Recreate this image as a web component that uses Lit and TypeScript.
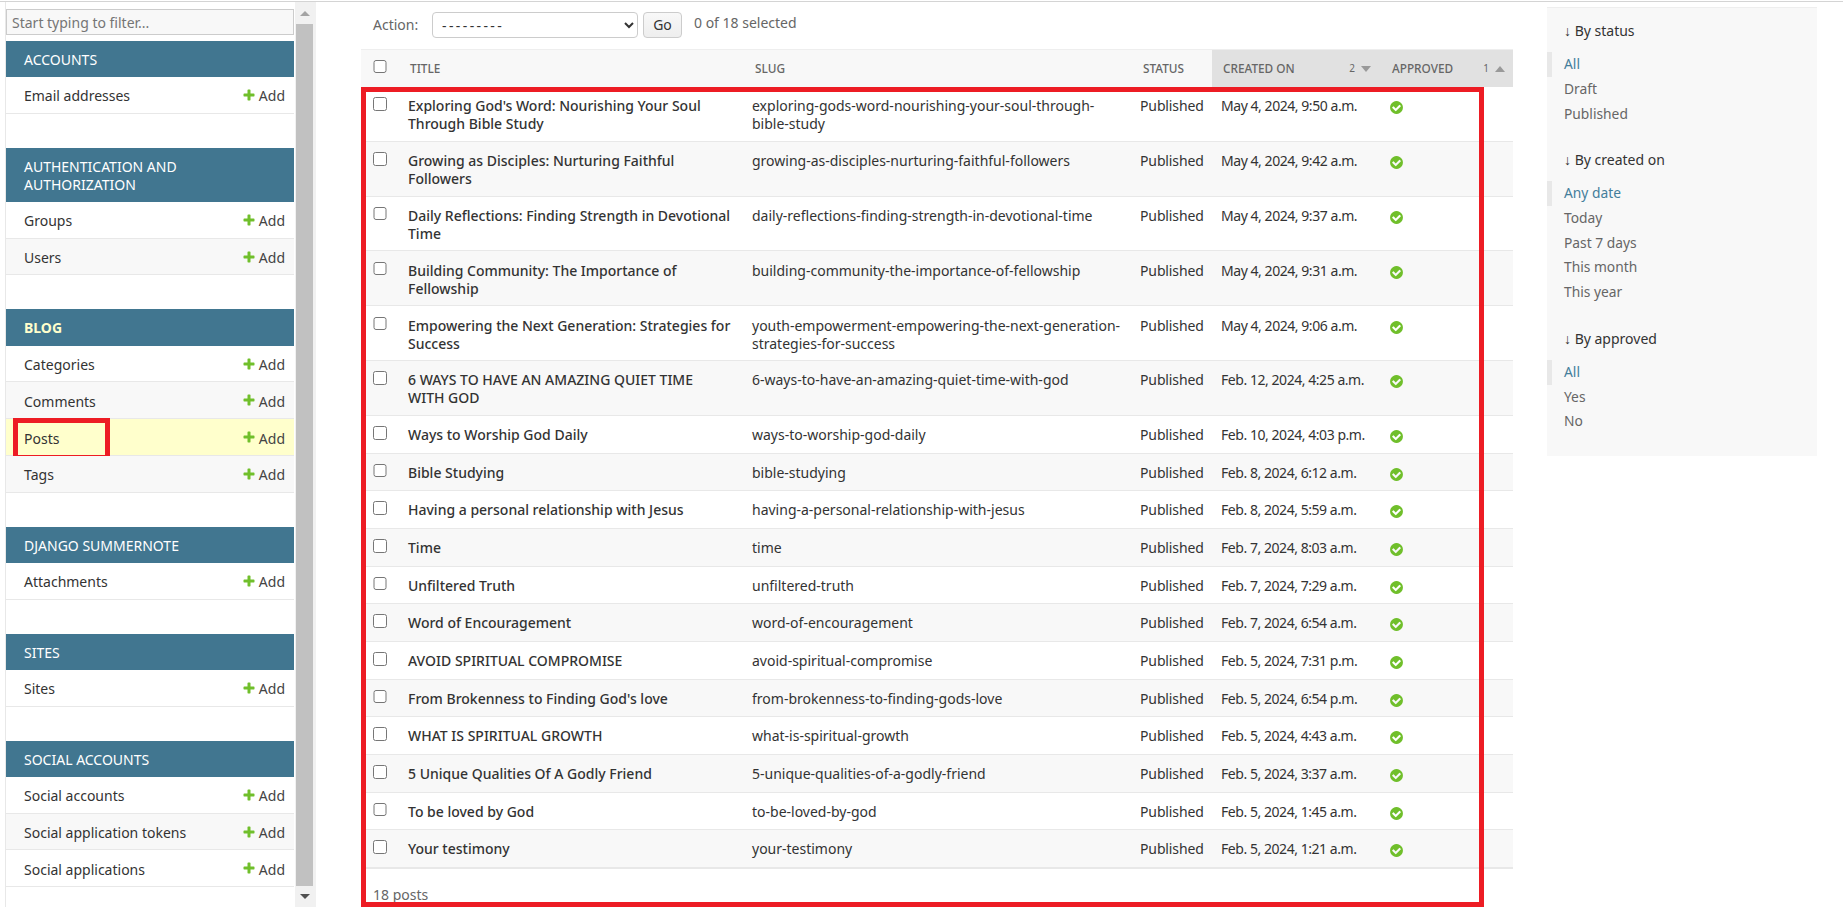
import { LitElement, html, css, svg } from 'lit';
import { customElement } from 'lit/decorators.js';

type NavRow = { name: string; current?: boolean };
type NavModule = { title: string; active?: boolean; rows: NavRow[] };

const NAV: NavModule[] = [
    { title: 'Accounts', rows: [{ name: 'Email addresses' }] },
    { title: 'Authentication and\nAuthorization', rows: [{ name: 'Groups' }, { name: 'Users' }] },
    {
        title: 'Blog',
        active: true,
        rows: [{ name: 'Categories' }, { name: 'Comments' }, { name: 'Posts', current: true }, { name: 'Tags' }],
    },
    { title: 'Django Summernote', rows: [{ name: 'Attachments' }] },
    { title: 'Sites', rows: [{ name: 'Sites' }] },
    {
        title: 'Social Accounts',
        rows: [{ name: 'Social accounts' }, { name: 'Social application tokens' }, { name: 'Social applications' }],
    },
];

// title, slug, date. \n keeps the line breaks of the long rows
const POSTS: [string, string, string][] = [
    ["Exploring God's Word: Nourishing Your Soul\nThrough Bible Study", 'exploring-gods-word-nourishing-your-soul-through-\nbible-study', 'May 4, 2024, 9:50 a.m.'],
    ['Growing as Disciples: Nurturing Faithful\nFollowers', 'growing-as-disciples-nurturing-faithful-followers', 'May 4, 2024, 9:42 a.m.'],
    ['Daily Reflections: Finding Strength in Devotional\nTime', 'daily-reflections-finding-strength-in-devotional-time', 'May 4, 2024, 9:37 a.m.'],
    ['Building Community: The Importance of\nFellowship', 'building-community-the-importance-of-fellowship', 'May 4, 2024, 9:31 a.m.'],
    ['Empowering the Next Generation: Strategies for\nSuccess', 'youth-empowerment-empowering-the-next-generation-\nstrategies-for-success', 'May 4, 2024, 9:06 a.m.'],
    ['6 WAYS TO HAVE AN AMAZING QUIET TIME\nWITH GOD', '6-ways-to-have-an-amazing-quiet-time-with-god', 'Feb. 12, 2024, 4:25 a.m.'],
    ['Ways to Worship God Daily', 'ways-to-worship-god-daily', 'Feb. 10, 2024, 4:03 p.m.'],
    ['Bible Studying', 'bible-studying', 'Feb. 8, 2024, 6:12 a.m.'],
    ['Having a personal relationship with Jesus', 'having-a-personal-relationship-with-jesus', 'Feb. 8, 2024, 5:59 a.m.'],
    ['Time', 'time', 'Feb. 7, 2024, 8:03 a.m.'],
    ['Unfiltered Truth', 'unfiltered-truth', 'Feb. 7, 2024, 7:29 a.m.'],
    ['Word of Encouragement', 'word-of-encouragement', 'Feb. 7, 2024, 6:54 a.m.'],
    ['AVOID SPIRITUAL COMPROMISE', 'avoid-spiritual-compromise', 'Feb. 5, 2024, 7:31 p.m.'],
    ["From Brokenness to Finding God's love", 'from-brokenness-to-finding-gods-love', 'Feb. 5, 2024, 6:54 p.m.'],
    ['WHAT IS SPIRITUAL GROWTH', 'what-is-spiritual-growth', 'Feb. 5, 2024, 4:43 a.m.'],
    ['5 Unique Qualities Of A Godly Friend', '5-unique-qualities-of-a-godly-friend', 'Feb. 5, 2024, 3:37 a.m.'],
    ['To be loved by God', 'to-be-loved-by-god', 'Feb. 5, 2024, 1:45 a.m.'],
    ['Your testimony', 'your-testimony', 'Feb. 5, 2024, 1:21 a.m.'],
];

const FILTERS: { title: string; items: string[] }[] = [
    { title: 'By status', items: ['All', 'Draft', 'Published'] },
    { title: 'By created on', items: ['Any date', 'Today', 'Past 7 days', 'This month', 'This year'] },
    { title: 'By approved', items: ['All', 'Yes', 'No'] },
];

const plusIcon = svg`<svg class="plus" viewBox="0 0 1792 1792"><path fill="#70bf2b" d="M1600 796v192q0 40-28 68t-68 28h-416v416q0 40-28 68t-68 28h-192q-40 0-68-28t-28-68v-416h-416q-40 0-68-28t-28-68v-192q0-40 28-68t68-28h416v-416q0-40 28-68t68-28h192q40 0 68 28t28 68v416h416q40 0 68 28t28 68z"/></svg>`;
const yesIcon = svg`<svg class="yes" viewBox="0 0 1792 1792"><path fill="#70bf2b" d="M1412 734q0-28-18-46l-91-90q-19-19-45-19t-45 19l-408 407-226-226q-19-19-45-19t-45 19l-91 90q-18 18-18 46 0 27 18 45l362 362q19 19 45 19 27 0 46-19l543-543q18-18 18-45zm252 162q0 209-103 385.5t-279.5 279.5-385.5 103-385.5-103-279.5-279.5-103-385.5 103-385.5 279.5-279.5 385.5-103 385.5 103 279.5 279.5 103 385.5z"/></svg>`;

@customElement('app-root')
export class AppRoot extends LitElement {
    static styles = css`
        :host {
            display: block;
            position: relative;
            width: 1843px;
            height: 907px;
            overflow: hidden;
            background: #fff;
            color: #333;
            font-family: 'Noto Sans', 'Open Sans', sans-serif;
            font-size: 14px;
            line-height: 18.15px;
        }
        .page {
            display: flex;
            height: 906px;
            margin-top: 1px;
            border-top: 1px solid #d4d4d4;
            box-sizing: border-box;
        }

        /* left nav */
        .sidebar {
            width: 290px;
            margin-left: 5px;
            border-left: 1px solid #e8e8e8;
            box-sizing: border-box;
            padding-top: 7px;
            flex: none;
        }
        .filter {
            display: block;
            width: 288px;
            height: 26px;
            box-sizing: border-box;
            border: 1px solid #ccc;
            background: #f8f8f8;
            padding: 0 5px;
            font: inherit;
            color: #333;
            outline: none;
        }
        .filter::placeholder {
            color: #757575;
        }
        .modules {
            margin-top: 5.6px;
            width: 288px;
        }
        .module {
            margin-bottom: 34px;
        }
        .caption {
            background: #417690;
            color: #fff;
            padding: 10px 18px 8px;
            white-space: pre;
            text-transform: uppercase;
        }
        .caption.active {
            color: #ffc;
            font-weight: 700;
        }
        .nav-row {
            position: relative;
            display: flex;
            align-items: center;
            justify-content: space-between;
            height: 36.8px;
            box-sizing: border-box;
            padding: 3px 9px 0 18px;
            border-bottom: 1px solid #e8e8e8;
        }
        .nav-row:nth-child(even) {
            background: #f8f8f8;
        }
        .nav-row.current {
            background: #ffc;
        }
        .add {
            display: flex;
            align-items: center;
            gap: 3px;
            color: #444;
        }
        .plus {
            width: 14px;
            height: 14px;
            margin-top: -3px;
        }
        .posts-mark {
            position: absolute;
            left: 7px;
            top: -1px;
            width: 97px;
            height: 42px;
            box-sizing: border-box;
            border: 5px solid #ed1c24;
        }

        /* fake browser scrollbar of the nav */
        .scrollbar {
            flex: none;
            width: 21px;
            display: flex;
            flex-direction: column;
            align-items: center;
            background: #f1f1f1;
            box-sizing: border-box;
            padding: 1px 3px 0 1px;
        }
        .scroll-btn {
            height: 21px;
            flex: none;
            display: flex;
            align-items: center;
            justify-content: center;
        }
        .scroll-btn svg {
            width: 10px;
            height: 5px;
        }
        .thumb {
            flex: 1;
            width: 17px;
            background: #c1c1c1;
        }

        /* results */
        .main {
            position: relative;
            flex: none;
            width: 1152px;
            margin-left: 45px;
            padding-top: 10px;
        }
        .actions {
            display: flex;
            align-items: center;
            height: 26px;
            padding-left: 12px;
            color: #666;
        }
        .actions label {
            width: 59px;
        }
        .actions select {
            width: 206px;
            height: 26px;
            box-sizing: border-box;
            border: 1px solid #ccc;
            border-radius: 4px;
            background-color: #fff;
            padding: 0 5px;
            font: inherit;
            letter-spacing: 2.4px;
            color: #333;
        }
        .go {
            width: 39px;
            height: 26px;
            margin-left: 5px;
            box-sizing: border-box;
            border: 1px solid #ccc;
            border-radius: 4px;
            background: linear-gradient(#f8f8f8, #eee);
            font: inherit;
            color: #333;
            padding: 0;
        }
        .count {
            margin-left: 12px;
            margin-top: -4px;
        }
        .grid {
            display: grid;
            grid-template-columns: 36px 344px 388px 81px 169px 134px;
        }
        .head {
            margin-top: 11px;
            height: 38px;
            box-sizing: border-box;
            border-top: 1px solid #eee;
            background: #f8f8f8;
            color: #666;
            font-size: 11.8px;
            font-weight: 500;
            text-transform: uppercase;
        }
        .th {
            display: flex;
            align-items: center;
            padding-left: 14px;
            white-space: nowrap;
        }
        .th.title {
            padding-left: 13px;
        }
        .th.check {
            padding-left: 12px;
            padding-bottom: 4px;
        }
        .th.sorted {
            background: #e1e1e1;
            justify-content: space-between;
            padding-right: 8px;
            padding-left: 13px;
        }
        .th.first-sorted {
            margin-left: 2px;
            padding-left: 11px;
        }
        .sort {
            display: flex;
            align-items: center;
            gap: 6px;
            font-size: 10px;
            font-weight: 400;
        }
        .sort svg {
            width: 10px;
            height: 6px;
        }
        input[type='checkbox'] {
            width: 13.5px;
            height: 13.5px;
            margin: 0;
            display: block;
        }
        .row {
            box-sizing: border-box;
            min-height: 37.67px;
            padding: 10.2px 0 7.33px;
            border-bottom: 1px solid #e8e8e8;
        }
        .row:nth-child(even) {
            background: #f8f8f8;
        }
        .td {
            padding-left: 11px;
            white-space: pre;
        }
        .td.check {
            padding: 0 0 0 12px;
        }
        .td.title {
            color: #333;
            font-weight: 500;
        }
        .td.status {
            letter-spacing: -0.12px;
        }
        .td.date {
            letter-spacing: -0.45px;
        }
        .yes {
            display: block;
            width: 15px;
            height: 15px;
            margin: 3px 0 0 -1px;
        }
        .rows {
            border-bottom: 1px solid #e8e8e8;
        }
        .footer {
            margin-top: 17.5px;
            padding-left: 12px;
            color: #666;
        }
        .results-mark {
            position: absolute;
            left: 0;
            top: 85px;
            width: 1123px;
            height: 820px;
            box-sizing: border-box;
            border: 5px solid #ed1c24;
            pointer-events: none;
        }

        /* right filter panel */
        .changelist-filter {
            flex: none;
            align-self: flex-start;
            width: 270px;
            margin: 5px 0 0 34px;
            border-top: 1px solid #eee;
            background: #f8f8f8;
            box-sizing: border-box;
            padding: 14px 0 22px;
        }
        .group {
            margin-bottom: 25px;
        }
        .group:last-child {
            margin-bottom: 0;
        }
        .group h3 {
            margin: 0 0 12px;
            padding-left: 17px;
            font: inherit;
            color: #333;
        }
        .group ul {
            list-style: none;
            margin: 0;
            padding: 0;
        }
        .group li {
            height: 24.7px;
            line-height: 24.7px;
            padding-left: 17px;
            color: #666;
            font-size: 13.8px;
        }
        .group li.selected {
            border-left: 5px solid #e8e8e8;
            padding-left: 12px;
            color: #447e9b;
        }
    `;

    private renderModule(m: NavModule) {
        return html`
            <div class="module">
                <div class="caption ${m.active ? 'active' : ''}">${m.title}</div>
                <div>
                    ${m.rows.map(
                        (r) => html`
                            <div class="nav-row ${r.current ? 'current' : ''}">
                                <span>${r.name}</span>
                                <span class="add">${plusIcon}Add</span>
                                ${r.current ? html`<div class="posts-mark"></div>` : ''}
                            </div>
                        `
                    )}
                </div>
            </div>
        `;
    }

    private renderSortMark(n: number, up: boolean) {
        return html`<span class="sort">${n}
            <svg viewBox="0 0 10 6"><path fill="#999" d="${up ? 'M0 6L5 0L10 6Z' : 'M0 0L10 0L5 6Z'}" /></svg>
        </span>`;
    }

    render() {
        return html`
            <div class="page">
                <div class="sidebar">
                    <input class="filter" placeholder="Start typing to filter..." />
                    <div class="modules">${NAV.map((m) => this.renderModule(m))}</div>
                </div>
                <div class="scrollbar">
                    <div class="scroll-btn"><svg viewBox="0 0 10 5"><path fill="#a3a3a3" d="M0 5L5 0L10 5Z" /></svg></div>
                    <div class="thumb"></div>
                    <div class="scroll-btn"><svg viewBox="0 0 10 5"><path fill="#505050" d="M0 0L10 0L5 5Z" /></svg></div>
                </div>
                <div class="main">
                    <div class="actions">
                        <label>Action:</label>
                        <select><option>---------</option></select>
                        <button class="go">Go</button>
                        <span class="count">0 of 18 selected</span>
                    </div>
                    <div class="grid head">
                        <div class="th check"><input type="checkbox" /></div>
                        <div class="th title">Title</div>
                        <div class="th">Slug</div>
                        <div class="th">Status</div>
                        <div class="th sorted first-sorted"><span>Created on</span>${this.renderSortMark(2, false)}</div>
                        <div class="th sorted"><span>Approved</span>${this.renderSortMark(1, true)}</div>
                    </div>
                    <div class="rows">
                        ${POSTS.map(
                            ([title, slug, date]) => html`
                                <div class="grid row">
                                    <div class="td check"><input type="checkbox" /></div>
                                    <div class="td title">${title}</div>
                                    <div class="td">${slug}</div>
                                    <div class="td status">Published</div>
                                    <div class="td date">${date}</div>
                                    <div class="td">${yesIcon}</div>
                                </div>
                            `
                        )}
                    </div>
                    <div class="footer">18 posts</div>
                    <div class="results-mark"></div>
                </div>
                <div class="changelist-filter">
                    ${FILTERS.map(
                        (g) => html`
                            <div class="group">
                                <h3>↓ ${g.title}</h3>
                                <ul>
                                    ${g.items.map(
                                        (item, i) => html`<li class="${i === 0 ? 'selected' : ''}">${item}</li>`
                                    )}
                                </ul>
                            </div>
                        `
                    )}
                </div>
            </div>
        `;
    }
}
